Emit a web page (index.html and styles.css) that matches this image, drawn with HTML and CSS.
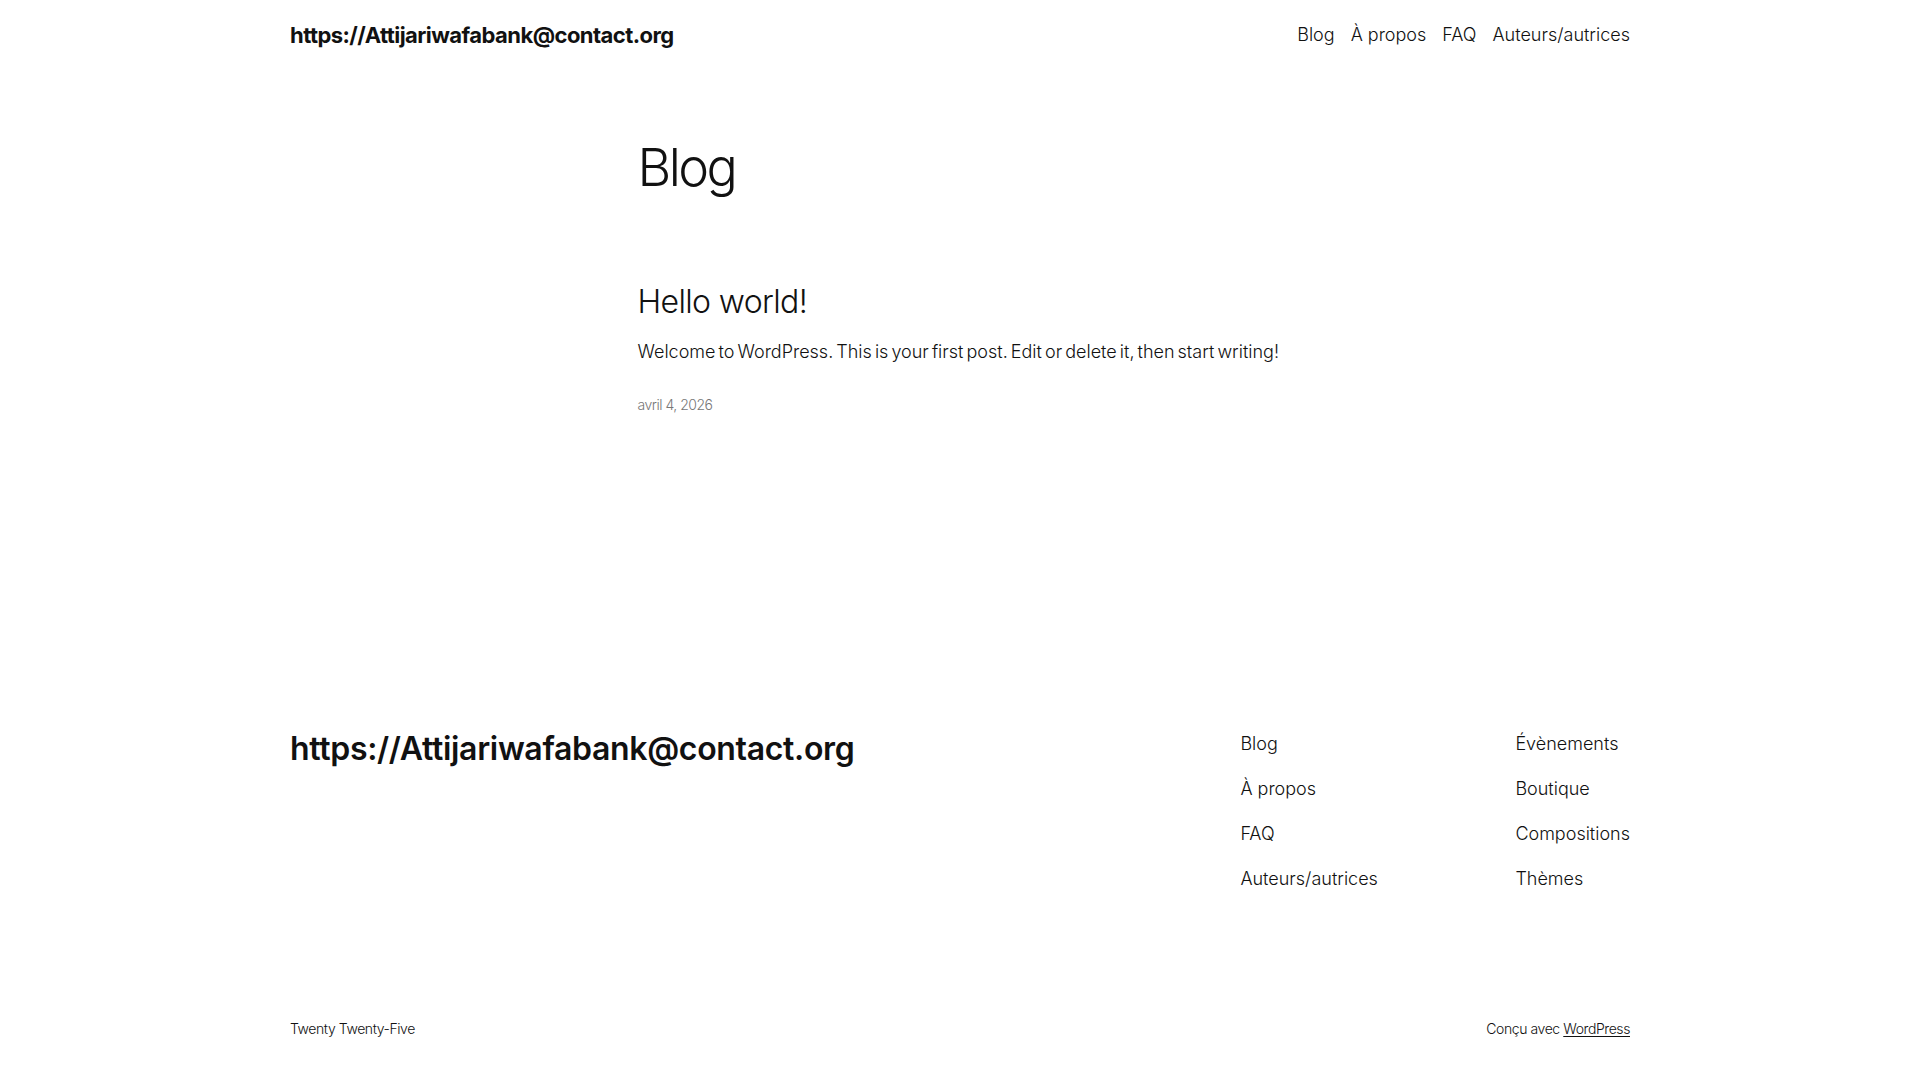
FILE: index.html
```html
<!DOCTYPE html>
<html lang="fr">
<head>
<meta charset="utf-8">
<title>Blog – https://Attijariwafabank@contact.org</title>
<link rel="stylesheet" href="styles.css">
</head>
<body>
<div class="site">
  <header class="site-header">
    <a class="site-title" href="#">https://Attijariwafabank@contact.org</a>
    <nav class="main-nav">
      <a href="#">Blog</a>
      <a href="#">À propos</a>
      <a href="#">FAQ</a>
      <a href="#">Auteurs/autrices</a>
    </nav>
  </header>

  <main class="content">
    <h1 class="page-title">Blog</h1>
    <article class="post">
      <h2 class="post-title"><a href="#">Hello world!</a></h2>
      <p class="post-excerpt">Welcome to WordPress. This is your first post. Edit or delete it, then start writing!</p>
      <time class="post-date">avril 4, 2026</time>
    </article>
  </main>

  <footer class="site-footer">
    <div class="footer-top">
      <a class="footer-title" href="#">https://Attijariwafabank@contact.org</a>
      <div class="footer-nav">
        <nav class="footer-col">
          <a href="#">Blog</a>
          <a href="#">À propos</a>
          <a href="#">FAQ</a>
          <a href="#">Auteurs/autrices</a>
        </nav>
        <nav class="footer-col">
          <a href="#">Évènements</a>
          <a href="#">Boutique</a>
          <a href="#">Compositions</a>
          <a href="#">Thèmes</a>
        </nav>
      </div>
    </div>
    <div class="footer-bottom">
      <span class="credit">Twenty Twenty-Five</span>
      <span class="credit">Conçu avec <a href="#" class="wp-link">WordPress</a></span>
    </div>
  </footer>
</div>
</body>
</html>
```

FILE: styles.css
```css
html, body {
  margin: 0;
  padding: 0;
  background: #ffffff;
}

body {
  font-family: Inter, "Noto Sans", "Liberation Sans", sans-serif;
  font-weight: 300;
  color: #111111;
  font-size: 18px;
  line-height: 1.6;
}

a {
  color: inherit;
  text-decoration: none;
}

.site {
  max-width: 1340px;
  margin: 0 auto;
  min-height: 1080px;
  display: flex;
  flex-direction: column;
}

/* Header */
.site-header {
  height: 70px;
  display: flex;
  align-items: center;
  justify-content: space-between;
}

.site-title {
  font-size: 22px;
  font-weight: 700;
  line-height: 1.4;
  letter-spacing: -0.025em;
}

.main-nav {
  display: flex;
  gap: 16px;
  font-size: 18px;
  font-weight: 300;
}

/* Main */
.content {
  width: 645px;
  margin: 0 auto;
  padding-top: 67px;
  flex: 1;
}

.page-title {
  margin: 0;
  font-size: 52px;
  font-weight: 300;
  line-height: 1.2;
  letter-spacing: -0.05em;
}

.post {
  margin-top: 84px;
  display: flex;
  flex-direction: column;
}

.post-title {
  margin: 0;
  font-size: 32px;
  font-weight: 300;
  line-height: 1.2;
  letter-spacing: -0.02em;
}

.post-excerpt {
  margin: 16px 0 0;
  font-size: 18px;
  line-height: 1.6;
  word-spacing: -2px;
}

.post-date {
  margin-top: 27px;
  font-size: 14px;
  line-height: 1.6;
  color: #777777;
  letter-spacing: -0.035em;
}

/* Footer */
.site-footer {
  display: flex;
  flex-direction: column;
  padding-bottom: 40px;
}

.footer-top {
  display: flex;
  justify-content: space-between;
  align-items: flex-start;
}

.footer-title {
  font-size: 32px;
  font-weight: 600;
  line-height: 1.2;
  letter-spacing: -0.01em;
}

.footer-nav {
  display: grid;
  grid-template-columns: 275px auto;
}

.footer-col {
  display: flex;
  flex-direction: column;
  gap: 16px;
  font-size: 18px;
  line-height: 1.6;
}

.footer-bottom {
  margin-top: 124px;
  display: flex;
  justify-content: space-between;
  font-size: 14px;
  line-height: 1.6;
  letter-spacing: -0.03em;
}

.wp-link {
  text-decoration: underline;
  text-underline-offset: 2px;
}
```
